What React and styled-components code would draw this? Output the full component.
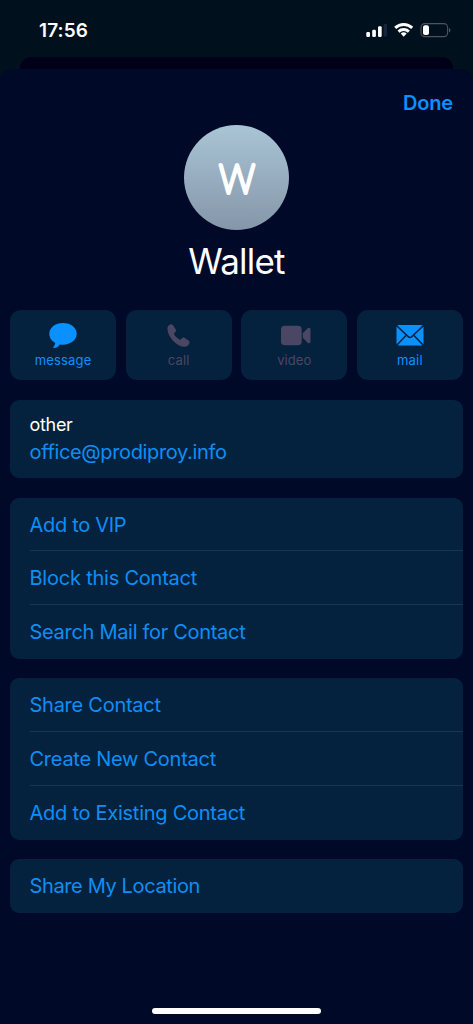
import React from "react";
import styled, { createGlobalStyle } from "styled-components";

const color = {
  status: "#00111d",
  behind: "#000019",
  sheet: "#000928",
  card: "#04223d",
  blue: "#0a91ff",
  link: "#0f8ef5",
  muted: "#4b4663",
  line: "#1d3450",
};

const GlobalStyle = createGlobalStyle`
  * { box-sizing: border-box; }
  body {
    margin: 0;
    background: ${color.status};
    font-family: Inter, "Liberation Sans", sans-serif;
  }
`;

const Screen = styled.div`
  display: flex;
  flex-direction: column;
  width: 473px;
  height: 1024px;
  overflow: hidden;
  background: ${color.status};
`;

const StatusBar = styled.header`
  display: flex;
  justify-content: space-between;
  height: 57px;
  padding: 19px 21px 0 39px;
`;

const Clock = styled.time`
  color: #fff;
  font-size: 19px;
  font-weight: 600;
  line-height: 24px;
  letter-spacing: 0.1px;
`;

const BackCard = styled.div`
  flex: none;
  height: 12px;
  margin: 0 20px;
  border-radius: 11px 11px 0 0;
  background: ${color.behind};
`;

const Sheet = styled.main`
  display: flex;
  flex: 1;
  flex-direction: column;
  padding: 0 10px;
  border-radius: 12px 12px 0 0;
  background: ${color.sheet};
`;

const TopBar = styled.div`
  display: flex;
  justify-content: flex-end;
  height: 56px;
  padding: 21px 10px 0 0;
`;

const DoneButton = styled.button`
  height: 26px;
  padding: 0;
  border: 0;
  background: none;
  color: ${color.blue};
  font: 600 20px/26px Inter, sans-serif;
  letter-spacing: ${(p) => p.$spacing}px;
`;

const Profile = styled.section`
  display: flex;
  flex-direction: column;
  align-items: center;
  height: 185px;
`;

const Avatar = styled.div`
  width: 105px;
  height: 105px;
  border-radius: 50%;
  overflow: hidden;
  background: linear-gradient(#a9c5d5, #8596a9);
`;

const Name = styled.h1`
  margin: 9px 0 0;
  color: #fff;
  font-size: 35px;
  font-weight: 400;
  line-height: 44px;
  letter-spacing: ${(p) => p.$spacing}px;
`;

const Actions = styled.nav`
  display: grid;
  grid-template-columns: repeat(4, 1fr);
  gap: 9.5px;
  height: 70px;
`;

const Action = styled.button`
  display: flex;
  flex-direction: column;
  align-items: center;
  padding: 11px 0 0;
  border: 0;
  border-radius: 11px;
  background: ${color.card};
  color: ${(p) => (p.$disabled ? color.muted : color.blue)};
  font: 400 13px/18px Inter, sans-serif;
  letter-spacing: ${(p) => p.$spacing}px;

  svg {
    display: block;
    margin-bottom: 2px;
    overflow: visible;
  }
`;

const Card = styled.section`
  margin-top: ${(p) => p.$gap || 19.5}px;
  border-radius: 9px;
  background: ${color.card};
`;

const EmailCard = styled(Card)`
  height: 78px;
  padding: 12px 19.5px 0;
`;

const Caption = styled.div`
  color: #fff;
  font-size: 18px;
  line-height: 25px;
  letter-spacing: ${(p) => p.$spacing}px;
`;

const Email = styled.div`
  margin-top: 2px;
  color: ${color.link};
  font-size: 20px;
  line-height: 26px;
  letter-spacing: ${(p) => p.$spacing}px;
`;

const Row = styled.div`
  height: 53.75px;
  margin-left: 19.5px;
  border-bottom: 1px solid ${color.line};
  color: ${color.link};
  font-size: 20px;
  line-height: 55px;
  letter-spacing: ${(p) => p.$spacing}px;

  &:last-child { border-bottom: 0; }
`;

const HomeIndicator = styled.div`
  width: 169px;
  height: 6px;
  margin: auto auto 10px;
  border-radius: 3px;
  background: #fff;
`;

const StatusIcons = () => (
  <svg width="86" height="20" viewBox="366 19 86 20">
    <g fill="#fff">
      <rect x="366.3" y="32" width="3.7" height="5" rx="1.2" />
      <rect x="372.2" y="29.7" width="3.7" height="7.3" rx="1.2" />
      <rect x="378" y="26.3" width="3.7" height="10.7" rx="1.2" />
    </g>
    <rect x="383.6" y="24" width="3.4" height="12.6" rx="1" fill="#17243c" />
    <g fill="none" stroke="#fff" strokeWidth="2.9">
      <path d="M395.2 27.9a12.3 12.3 0 0 1 17 0" />
      <path d="M398.5 31.6a7.6 7.6 0 0 1 10.4 0" />
    </g>
    <path d="M403.7 36.7l-3-3.1a4.4 4.4 0 0 1 6 0z" fill="#fff" />
    <rect x="421" y="23.6" width="26.6" height="13" rx="3.8" fill="none" stroke="#50505f" strokeWidth="1.1" />
    <rect x="423" y="25.3" width="6" height="9.7" rx="2" fill="#fff" />
    <path d="M449.2 28v4.4c1.6-.8 1.6-3.6 0-4.4z" fill="#666878" />
  </svg>
);

const MessageIcon = () => (
  <svg width="30" height="28" viewBox="0 0 30 28" fill="currentColor">
    <path d="M15 2C7.300 2 1.300 6.700 1.300 12.800c0 4 2.300 7.200 6 9.100-.2 1.500-1 2.900-2.100 4.200-.5.700 0 1 .7.900 2.600-.3 4.600-1.700 6-3.600 1 .2 2 .3 3.100.3 7.700 0 13.700-4.800 13.700-10.900S22.700 2 15 2z" />
  </svg>
);

const CallIcon = () => (
  <svg width="30" height="28" viewBox="0.8 0 30 28" fill="currentColor">
    <path d="M4.200 7.300c0-1.500 1.300-3.200 2.700-3.800 1.300-.6 2.200-.1 3 1l2.400 3.400c.8 1.200.7 2.300-.2 3.200l-1.100 1.100c-.3.400-.3.800 0 1.300.5.900 1.300 1.900 2.300 2.800 1 1 2 1.800 2.900 2.300.5.300 1 .3 1.300-.1l1-1.100c.9-1 2-1.100 3.200-.3l3.500 2.400c1.200.8 1.500 1.700.9 3-.7 1.600-2.400 3.200-4.300 3.300-3.500.2-8.300-2.200-12.200-6.300-3.500-3.700-5.400-8.300-5.400-12.200z" />
  </svg>
);

const VideoIcon = () => (
  <svg width="30" height="28" viewBox="-1.700 0 30 28" fill="currentColor">
    <rect x="0.300" y="4.800" width="20.700" height="19.400" rx="3.800" />
    <path d="M22.100 12.300l4.600-4.700c1.500-1.500 3.100-1 3.100.8v12.200c0 1.800-1.600 2.300-3.100.8l-4.600-4.700z" />
  </svg>
);

const MailIcon = () => (
  <svg width="30" height="28" viewBox="0 0 30 28" fill="none">
    <rect x="1.500" y="4" width="27" height="20.400" rx="2.500" fill="currentColor" />
    <g stroke={color.card} strokeWidth="1.500">
      <path d="M1.700 4.700l11.500 10.900c1.200 1.100 2.400 1.100 3.600 0L28.300 4.700" />
      <path d="M2 23.900l9-9.400M28 23.900l-9-9.400" />
    </g>
  </svg>
);

const Monogram = ({ letter }) => (
  <svg width="105" height="105" viewBox="0 0 105 105">
    <text
      x="52.900"
      y="67.700"
      textAnchor="middle"
      fontFamily="Lato, Inter, sans-serif"
      fontSize="39"
      fontWeight="100"
      fill="#fff"
      stroke="#fff"
      strokeWidth="4.200"
      strokeLinejoin="round"
      textLength="35.500"
      lengthAdjust="spacingAndGlyphs"
    >
      {letter}
    </text>
  </svg>
);

const actions = [
  { label: "message", Icon: MessageIcon, spacing: 0.15 },
  { label: "call", Icon: CallIcon, disabled: true, spacing: 0.2 },
  { label: "video", Icon: VideoIcon, disabled: true, spacing: 0.1 },
  { label: "mail", Icon: MailIcon, spacing: 0.2 },
];

const groups = [
  [
    ["Add to VIP", -0.3],
    ["Block this Contact", -0.22],
    ["Search Mail for Contact", -0.3],
  ],
  [
    ["Share Contact", -0.26],
    ["Create New Contact", -0.26],
    ["Add to Existing Contact", -0.26],
  ],
  [["Share My Location", -0.37]],
];

export default function App() {
  return (
    <Screen>
      <GlobalStyle />
      <StatusBar>
        <Clock>17:56</Clock>
        <StatusIcons />
      </StatusBar>
      <BackCard />
      <Sheet>
        <TopBar>
          <DoneButton $spacing={-0.2}>Done</DoneButton>
        </TopBar>
        <Profile>
          <Avatar>
            <Monogram letter="W" />
          </Avatar>
          <Name $spacing={-0.8}>Wallet</Name>
        </Profile>
        <Actions>
          {actions.map(({ label, Icon, disabled, spacing }) => (
            <Action key={label} $disabled={disabled} $spacing={spacing}>
              <Icon />
              {label}
            </Action>
          ))}
        </Actions>
        <EmailCard $gap={20}>
          <Caption $spacing={-0.3}>other</Caption>
          <Email $spacing={-0.35}>office@prodiproy.info</Email>
        </EmailCard>
        {groups.map((rows) => (
          <Card key={rows[0][0]}>
            {rows.map(([label, spacing]) => (
              <Row key={label} $spacing={spacing}>{label}</Row>
            ))}
          </Card>
        ))}
        <HomeIndicator />
      </Sheet>
    </Screen>
  );
}
